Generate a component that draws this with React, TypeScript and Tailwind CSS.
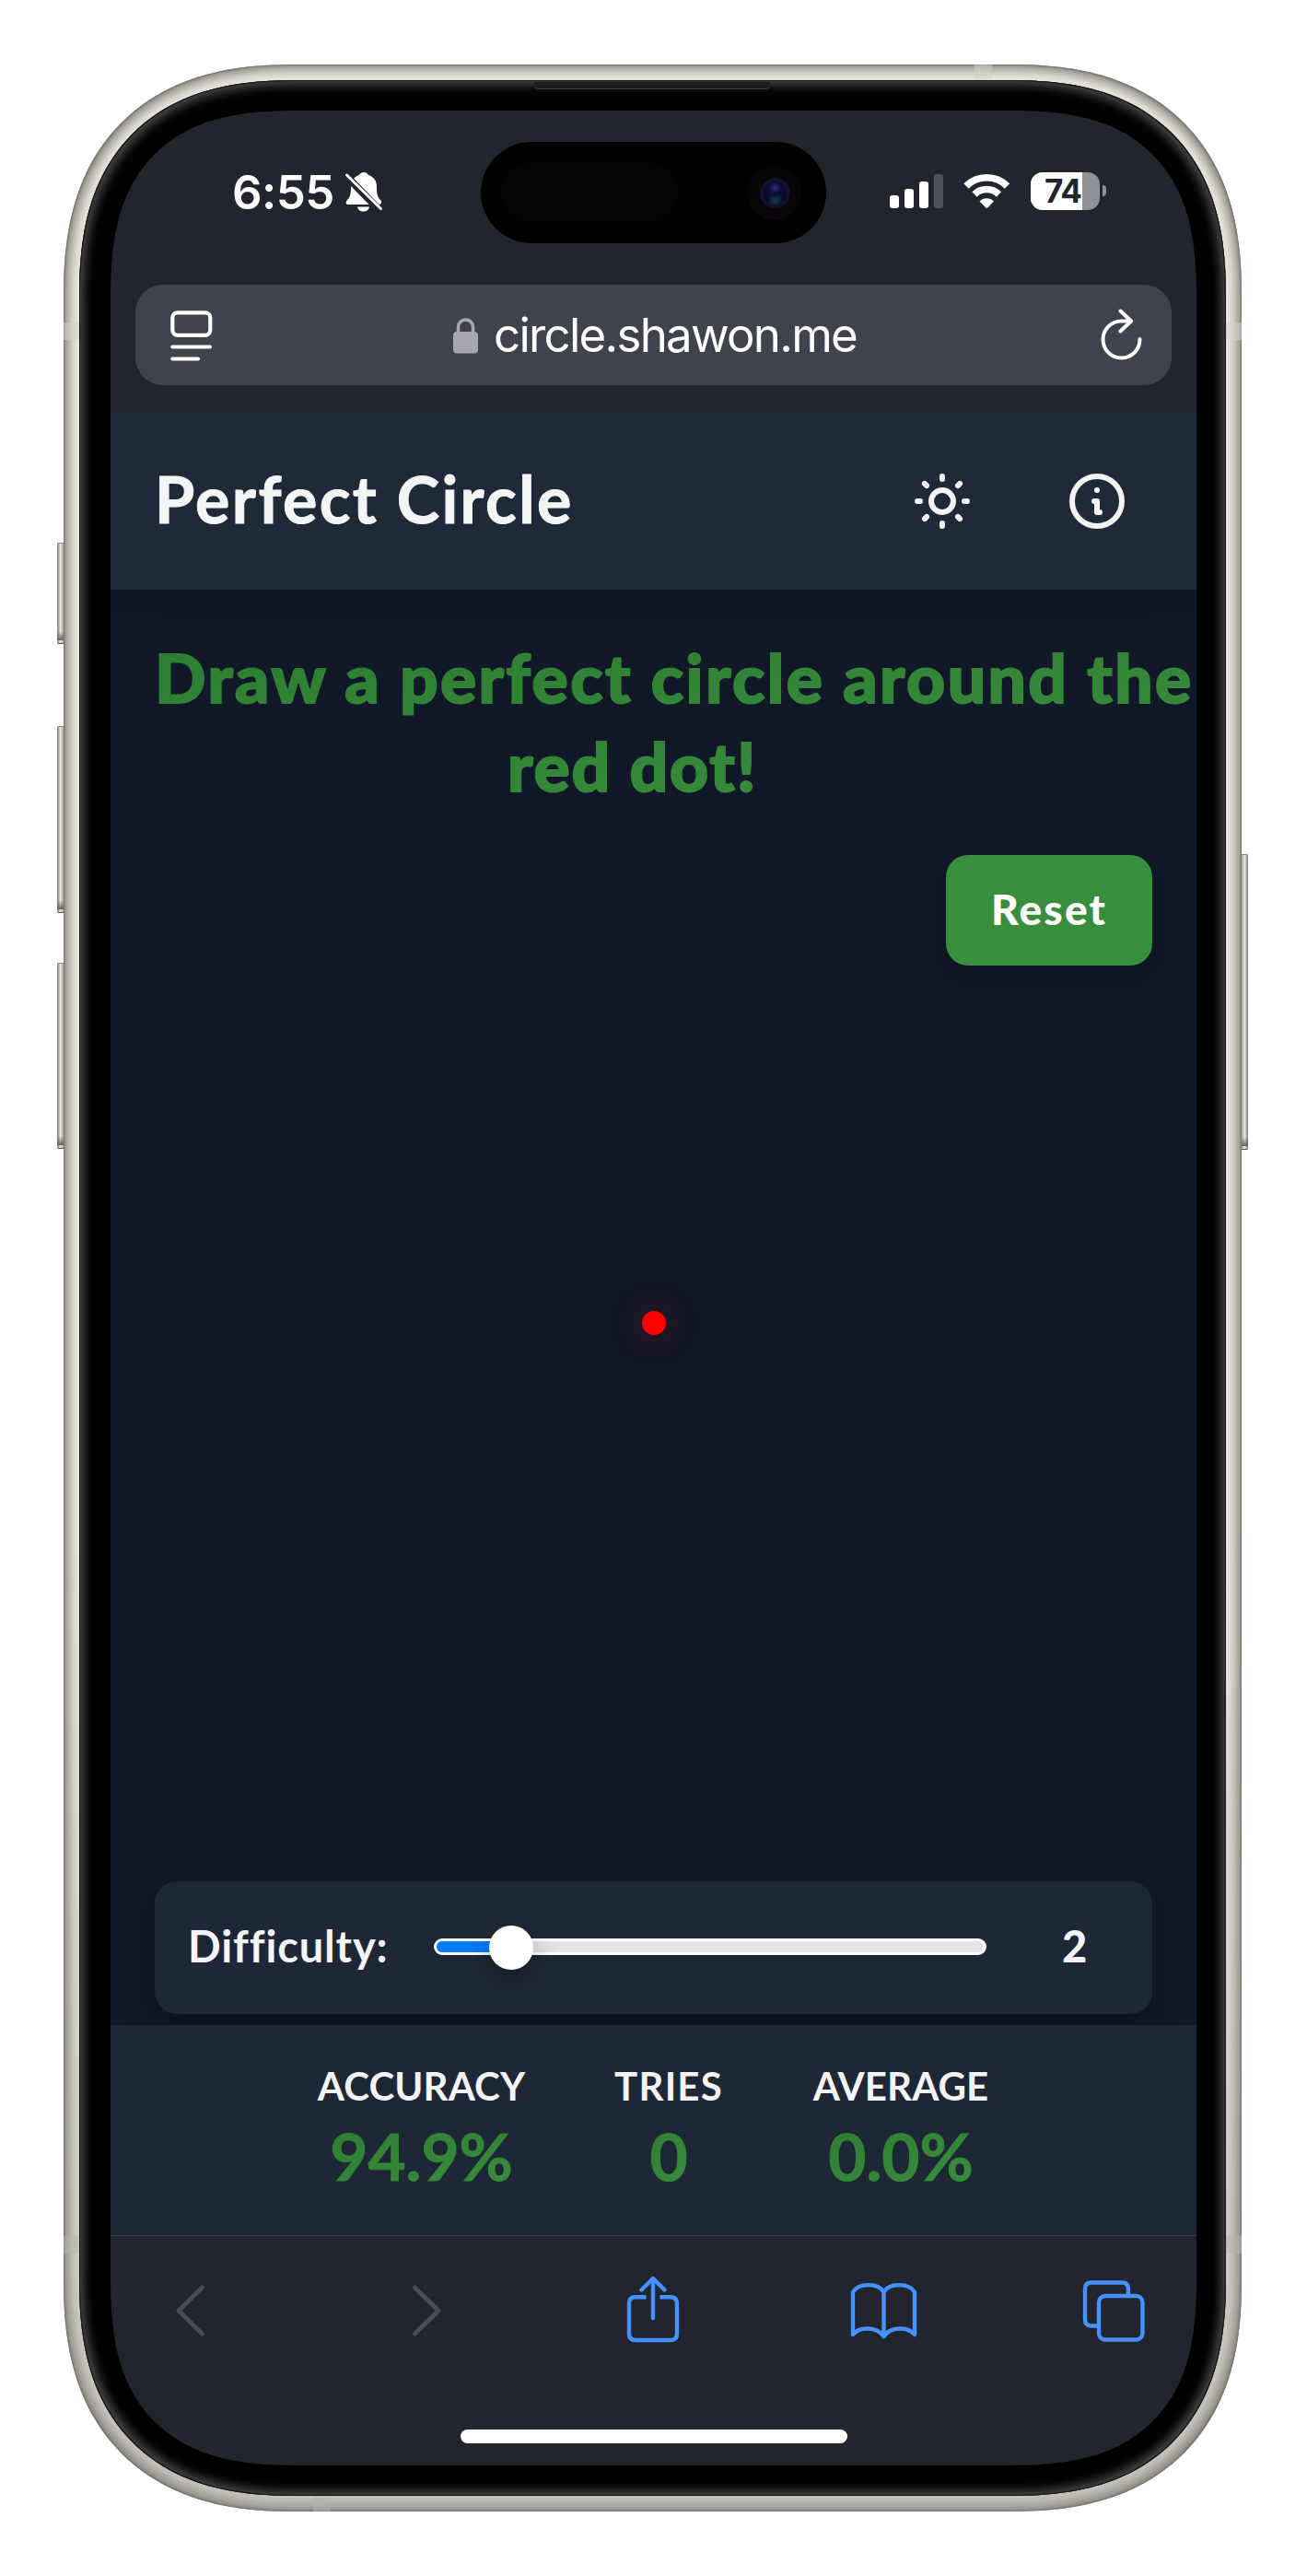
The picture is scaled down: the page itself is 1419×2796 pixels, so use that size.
function SideButton({ className }: { className: string }) {
  return (
    <div className={`absolute w-[7px] overflow-hidden bg-linear-to-r ${className}`}>
      <div className="h-full w-full shadow-[inset_0_1px_0_#8b8981,inset_0_-1px_0_#55534d]" />
      <div className="absolute inset-x-0 bottom-[4px] h-[10px] bg-linear-to-b from-transparent to-[#65635c]" />
    </div>
  );
}

function StatusBar() {
  return (
    <div className="relative flex h-[189px] pt-[66px] text-white">
      <span className="ml-[132px] whitespace-nowrap text-[51px] leading-[45px] font-semibold tracking-[-0.6px]">6:55</span>
      <svg className="absolute left-[254px] top-[66px]" width="42" height="45" viewBox="0 0 42 45">
        <path d="M21 1C23.5 1 25 2 26 4C32 6 35 10 35 17C35 25 36 28 39 31C41 33 40 36 38 36H4C1 36 1 33 3 31C6 28 7 25 7 17C7 10 10 6 16 4C17 2 18.500 1 21 1Z" fill="#fff" />
        <path d="M14 38.500H27C26.500 41.500 24 43.500 20.500 43.500C17 43.500 14.500 41.500 14 38.500Z" fill="#fff" />
        <path d="M0 3L39 43" stroke="#22252e" strokeWidth="8" />
        <path d="M2.500 4L39.500 40.500" stroke="#fff" strokeWidth="3" strokeLinecap="round" />
      </svg>
      <div className="absolute left-[402px] top-[34px] h-[110px] w-[375px] rounded-full bg-black">
        <div className="absolute left-[21px] top-[22px] h-[66px] w-[194px] rounded-full bg-[#040404]" />
        <div className="absolute left-[289px] top-[25px] flex size-[60px] items-center justify-center rounded-full bg-linear-to-b from-[#040405] to-[#0b040b]">
          <div className="flex size-[33px] items-center justify-center rounded-full bg-[#10122a]">
            <div className="size-[25px] rounded-full bg-[radial-gradient(circle_at_50%_28%,#30336f_0,#0a0b38_30%,transparent_48%),radial-gradient(circle_at_50%_82%,#123f55_0,#070823_40%,#0b0c45_100%)]" />
          </div>
        </div>
      </div>
      <svg className="absolute left-[846px] top-[66px]" width="240" height="44" viewBox="0 0 240 44">
        <rect x="0" y="26" width="10" height="14" rx="3" fill="#fff" />
        <rect x="16" y="19" width="10" height="21" rx="3" fill="#fff" />
        <rect x="32" y="11" width="10" height="29" rx="3" fill="#fff" />
        <rect x="48" y="3" width="10" height="37" rx="3" fill="#505259" />
        <path d="M83 16A31.500 31.500 0 0 1 127.500 16" fill="none" stroke="#fff" strokeWidth="7.500" />
        <path d="M92 25A19 19 0 0 1 118.500 25" fill="none" stroke="#fff" strokeWidth="7.500" />
        <path d="M97.500 32.500A11 11 0 0 1 113 32.500L106.500 39.300Q105.300 40.300 104.100 39.300Z" fill="#fff" />
      </svg>
      <div className="absolute left-[999px] top-[67px] flex h-[41px] w-[75px] overflow-hidden rounded-[13px] bg-[#919297]">
        <div className="h-full w-[56px] bg-white" />
      </div>
      <span className="absolute left-[1014px] top-[67px] text-[35px] leading-[41px] font-bold tracking-[-1px] text-[#22252e]">74</span>
      <div className="absolute left-[1077px] top-[81px] h-[12px] w-[4px] rounded-r-full bg-[#919297]" />
    </div>
  );
}

function AddressBar() {
  return (
    <div className="mx-[27px] flex h-[109px] items-center rounded-[30px] bg-[#40434c] text-white">
      <svg className="mt-[2px] ml-[38px]" width="46" height="56" viewBox="0 0 46 56" fill="none" stroke="#fff" strokeWidth="4.200" strokeLinecap="round">
        <rect x="2.300" y="2.300" width="41" height="24.500" rx="5.500" />
        <path d="M2.300 39.500H43M2.300 52.500H30" />
      </svg>
      <svg className="ml-[261px]" width="27" height="40" viewBox="0 0 27 40">
        <path d="M5.500 18V11A8 8 0 0 1 21.500 11V18" fill="none" stroke="#a7a7b2" strokeWidth="3.600" />
        <rect x="0" y="16" width="27" height="23.500" rx="4" fill="#a7a7b2" />
      </svg>
      <span className="ml-[17px] w-[659px] whitespace-nowrap text-[51px] leading-[60px] tracking-[-1.75px]">circle.shawon.me</span>
      <svg className="mb-[1px]" width="46" height="56" viewBox="0 0 46 56" fill="none" stroke="#fff" strokeWidth="4" strokeLinecap="round" strokeLinejoin="round">
        <path d="M42.500 33A20 20 0 1 1 22.500 13.500H33" />
        <path d="M21.500 2.500L33 13.500L21.500 24.500" />
      </svg>
    </div>
  );
}

function Header() {
  return (
    <header className="relative z-10 mt-[30px] flex h-[192px] items-center bg-[#1f2937] px-[48px] font-['Lato'] text-[#f3f4f6] shadow-[0_30px_45px_-9px_rgba(0,0,0,0.1),0_12px_18px_-6px_rgba(0,0,0,0.1)]">
      <h1 className="mb-[6px] whitespace-nowrap text-[70px] leading-[84px] font-bold tracking-[2.4px] [-webkit-text-stroke:1px_#f3f4f6]">Perfect Circle</h1>
      <div className="ml-auto flex gap-[96px] pr-[24px]">
        <svg width="72" height="72" viewBox="0 0 24 24" fill="none" stroke="currentColor" strokeWidth="2" strokeLinecap="round" strokeLinejoin="round">
          <path d="M12 3v1m0 16v1m9-9h-1M4 12H3m15.364 6.364l-.707-.707M6.343 6.343l-.707-.707m12.728 0l-.707.707M6.343 17.657l-.707.707M16 12a4 4 0 11-8 0 4 4 0 018 0z" />
        </svg>
        <svg width="72" height="72" viewBox="0 0 24 24" fill="none" stroke="currentColor" strokeWidth="2" strokeLinecap="round" strokeLinejoin="round">
          <path d="M13 16h-1v-4h-1m1-4h.01M21 12a9 9 0 11-18 0 9 9 0 0118 0z" />
        </svg>
      </div>
    </header>
  );
}

function Game() {
  return (
    <main className="flex h-[1558px] flex-col bg-[#111827] px-[48px] pb-[12px] font-['Lato']">
      <h2 className="mt-[47px] w-[1131px] bg-linear-to-br from-[#2e7d32] to-[#388e3c] bg-clip-text text-[73px] leading-[96px] font-black whitespace-nowrap text-transparent [-webkit-text-stroke:2px_transparent]">
        <span className="tracking-[2.45px]">Draw a perfect circle around the</span>
        <br />
        <span className="ml-[383px] tracking-[1.9px]">red dot!</span>
      </h2>
      <button className="mt-[49px] h-[120px] w-[224px] self-end rounded-[24px] bg-[#388e3c] pb-[4px] text-[46px] font-black tracking-[2.2px] text-white shadow-[0_30px_45px_-9px_rgba(0,0,0,0.1),0_12px_18px_-6px_rgba(0,0,0,0.1)]">
        Reset
      </button>
      <div className="flex flex-1 justify-center pt-[375px]">
        <div className="size-[26px] rounded-full bg-[#ff0000] shadow-[0_0_30px_8px_rgba(255,0,0,0.12),0_0_60px_6px_rgba(255,0,0,0.08)]" />
      </div>
      <div className="flex h-[144px] items-center rounded-[24px] bg-[#1e2735] pl-[36px] text-[#f3f4f6] shadow-[0_30px_45px_-9px_rgba(0,0,0,0.15),0_12px_18px_-6px_rgba(0,0,0,0.15)]">
        <span className="mb-[4px] w-[267px] text-[47px] leading-[60px] font-bold tracking-[0.85px] whitespace-nowrap [font-variant-ligatures:none]">Difficulty:</span>
        <div className="relative mb-[2px] h-[18px] w-[600px] rounded-full border-[3px] border-white bg-[#e4e4e6]">
          <div className="h-full w-[90px] rounded-l-full bg-[#007aff]" />
          <div className="absolute left-[57px] top-[-17px] size-[48px] rounded-full bg-white shadow-[0_12px_30px_rgba(0,0,0,0.3)]" />
        </div>
        <span className="mb-[4px] ml-[82px] text-[47px] leading-[60px] font-black">2</span>
      </div>
    </main>
  );
}

const stats = [
  { label: "ACCURACY", value: "94.9%", box: "w-[227px]", track: "tracking-[0.1px]" },
  { label: "TRIES", value: "0", box: "w-[118px]", track: "tracking-[1.2px]" },
  { label: "AVERAGE", value: "0.0%", box: "w-[194px]", track: "tracking-[0.1px]" },
];

function Stats() {
  return (
    <footer className="flex h-[228px] justify-center gap-[96px] bg-[#1e2735] pt-[36px] font-['Lato']">
      {stats.map((s) => (
        <div key={s.label} className={`flex flex-col items-center ${s.box}`}>
          <span className={`text-[42px] leading-[60px] font-bold text-[#f3f4f6] ${s.track}`}>{s.label}</span>
          <span className="mt-[4px] bg-linear-to-br from-[#2e7d32] to-[#388e3c] bg-clip-text text-[71px] leading-[84px] font-bold text-transparent [-webkit-text-stroke:1px_transparent]">{s.value}</span>
        </div>
      ))}
    </footer>
  );
}

function Toolbar() {
  return (
    <nav className="relative flex h-[250px] items-start border-t border-[#3f4043] pt-[43px]">
      <svg className="ml-[70px]" width="34" height="72" viewBox="0 0 34 72" fill="none" stroke="#4b4c51" strokeWidth="5" strokeLinecap="round" strokeLinejoin="round"><path d="M29.500 13L4 38L29.500 63" /></svg>
      <svg className="ml-[223px]" width="34" height="72" viewBox="0 0 34 72" fill="none" stroke="#4b4c51" strokeWidth="5" strokeLinecap="round" strokeLinejoin="round"><path d="M3.500 13L29 38L3.500 63" /></svg>
      <svg className="ml-[199px]" width="60" height="76" viewBox="0 0 60 76" fill="none" stroke="#4592ff" strokeWidth="4.400" strokeLinecap="round" strokeLinejoin="round">
        <path d="M29 3.500V46M16.500 15.500L29 3L41.500 15.500" />
        <path d="M21.500 23.200H10Q3 23.200 3 30.200V63Q3 70 10 70H48Q55 70 55 63V30.200Q55 23.200 48 23.200H36.500" strokeLinecap="butt" />
      </svg>
      <svg className="ml-[183px]" width="74" height="76" viewBox="0 0 74 76" fill="none" stroke="#4592ff" strokeWidth="4.400" strokeLinecap="round" strokeLinejoin="round">
        <path d="M36.500 18C31 7.500 9 7.500 3 18V64C10 55 29 55 36.500 66C44 55 63 55 70 64V18C64 7.500 42 7.500 36.500 18V66" />
      </svg>
      <svg className="ml-[178px]" width="70" height="76" viewBox="0 0 70 76" fill="none" stroke="#4592ff" strokeWidth="4.400">
        <path d="M16 54.500H10Q3 54.500 3 47.500V14.500Q3 7.500 10 7.500H43Q50 7.500 50 14.500V21" />
        <rect x="18" y="22" width="47.500" height="47.500" rx="7" />
      </svg>
      <div className="absolute bottom-[24px] left-[380px] h-[15px] w-[420px] rounded-full bg-white" />
    </nav>
  );
}

export default function App() {
  return (
    <div className="relative h-[2796px] w-[1419px] overflow-hidden bg-white pl-[69px] pt-[70px] font-['Inter',sans-serif]">
      <SideButton className="left-[62px] top-[589px] h-[110px] rounded-l-[2px] from-[#777570] via-[#e8e7e2] to-[#a5a39d]" />
      <SideButton className="left-[62px] top-[788px] h-[203px] rounded-l-[2px] from-[#777570] via-[#e8e7e2] to-[#a5a39d]" />
      <SideButton className="left-[62px] top-[1045px] h-[202px] rounded-l-[2px] from-[#777570] via-[#e8e7e2] to-[#a5a39d]" />
      <SideButton className="left-[1348px] top-[927px] h-[321px] rounded-r-[2px] from-[#a5a39d] via-[#e8e7e2] to-[#777570]" />
      <div className="relative h-[2656px] w-[1279px] overflow-hidden rounded-[250px] bg-linear-to-b from-[#ebe8df] from-60% to-[#c6c4bd] p-[17px] shadow-[inset_0_0_2px_1px_#73716b,inset_0_0_13px_5px_#807e77] [corner-shape:superellipse(1.255)]">
        <div className="absolute left-[989px] top-0 h-[17px] w-[19px] bg-[#d3d1cc]/50" />
        <div className="absolute left-[271px] bottom-0 h-[17px] w-[19px] bg-[#b5b3ad]/50" />
        <div className="absolute left-0 top-[280px] h-[19px] w-[17px] bg-[#d3d1cc]/50" />
        <div className="absolute right-0 top-[280px] h-[19px] w-[17px] bg-[#d3d1cc]/50" />
        <div className="absolute left-0 top-[2357px] h-[19px] w-[17px] bg-[#b5b3ad]/50" />
        <div className="absolute right-0 top-[2357px] h-[19px] w-[17px] bg-[#b5b3ad]/50" />
        <div className="relative h-full w-full rounded-[235px] bg-black p-[33px] pl-[34px] shadow-[inset_0_0_0_1px_#151515,inset_0_0_12px_5px_#4c4c4c] [corner-shape:superellipse(1.29)]">
          <div className="absolute left-[494px] top-[2px] h-[8px] w-[256px] rounded-b-[5px] border-b border-[#444] bg-[#1c1c1c]" />
          <div className="flex h-[2556px] w-[1179px] flex-col overflow-hidden rounded-[205px] bg-[#22252e] [corner-shape:superellipse(1.39)]">
            <StatusBar />
            <AddressBar />
            <Header />
            <Game />
            <Stats />
            <Toolbar />
          </div>
        </div>
      </div>
    </div>
  );
}
